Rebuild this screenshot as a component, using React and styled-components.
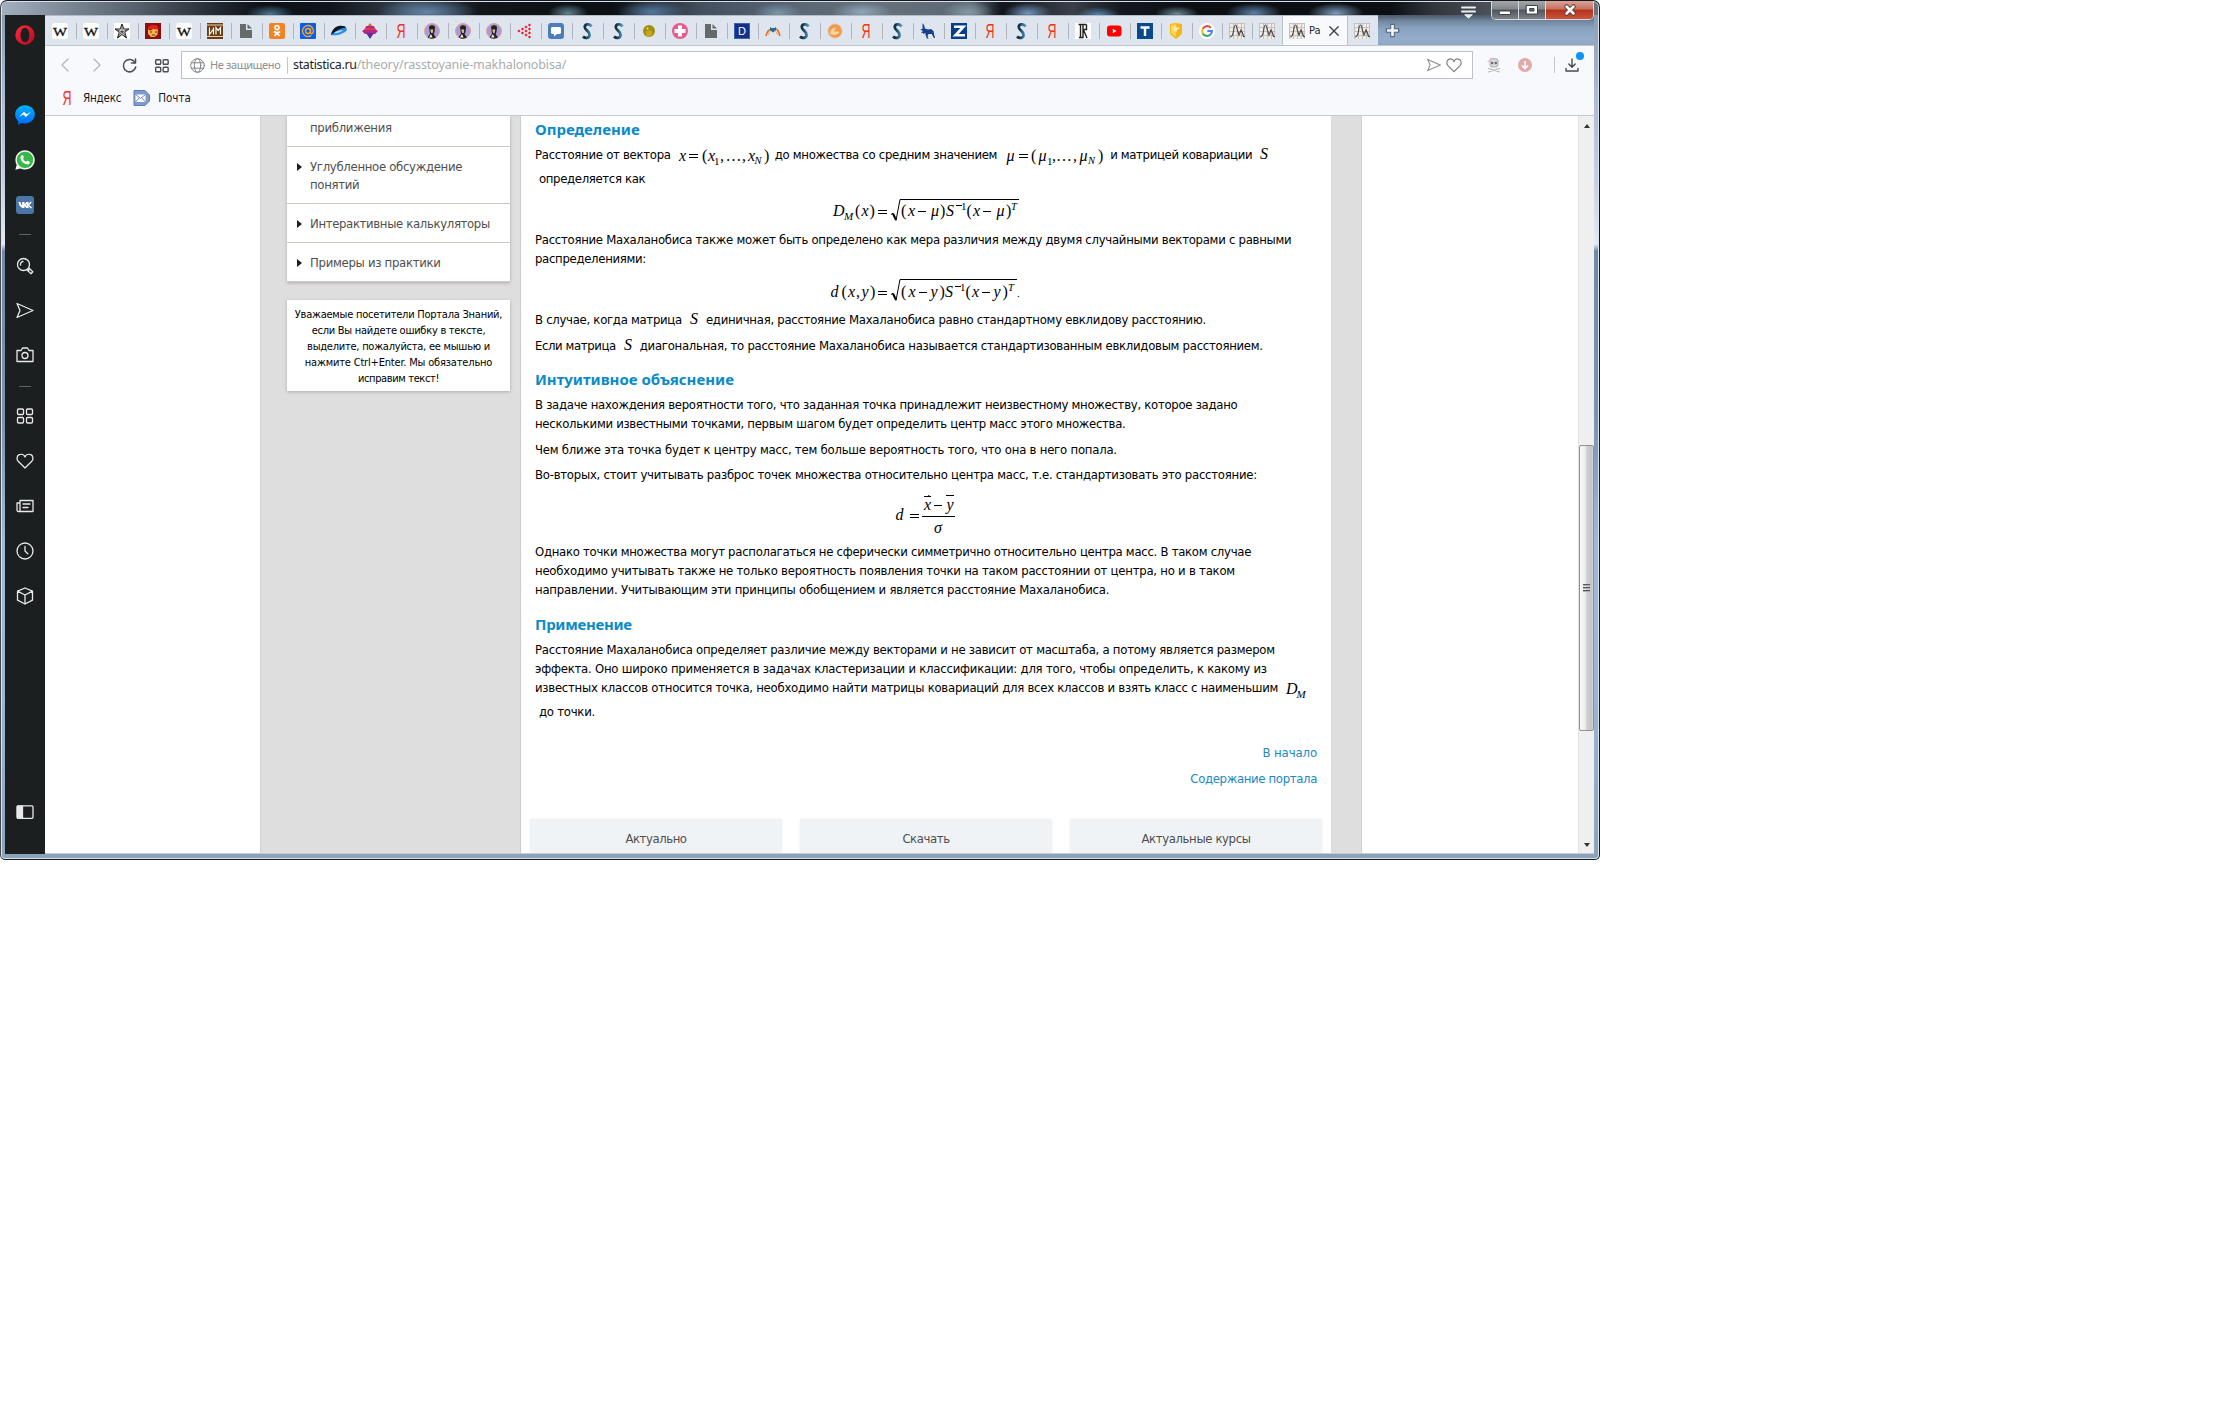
import React from 'react';
import styled, { createGlobalStyle, css } from 'styled-components';

const UI = '"DejaVu Sans Condensed", "DejaVu Sans", "Noto Sans", sans-serif';
const CHROME = '"Noto Sans", "Open Sans", sans-serif';

const Global = createGlobalStyle`
  * { box-sizing: border-box; }
  body { margin: 0; background: #fff; }
  svg { display: block; flex: none; overflow: visible; }
`;

/* ---------- window frame ---------- */
const Window = styled.div`
  width: 1600px;
  height: 860px;
  display: flex;
  flex-direction: column;
  overflow: hidden;
  border: 1px solid #14181d;
  border-left-color: #45484d;
  border-radius: 7px 7px 5px 5px;
  box-shadow: inset 0 0 0 1px #d7e3ee;
  background: linear-gradient(180deg, #8797ab 0, #a9b9d2 90px, #c3d0e4 180px, #e4e9f4 243px, #7188a6 250px, #7c93b1 420px, #9fbad9 540px, #9cb5d0 700px, #8ba3b9 100%);
  font-family: ${UI};
`;

const TitleBar = styled.header`
  height: 13px;
  flex: none;
  margin: 1px 1px 0;
  position: relative;
  border-radius: 5px 5px 0 0;
  background:
    radial-gradient(ellipse 24px 9px at 268px 12px, #4d7594, transparent),
    radial-gradient(ellipse 50px 14px at 425px 10px, #6285a8, transparent),
    radial-gradient(ellipse 20px 9px at 566px 11px, #5f8190, transparent),
    radial-gradient(ellipse 34px 12px at 650px 10px, #54799f, transparent),
    radial-gradient(ellipse 24px 10px at 776px 11px, #7997a8, transparent),
    radial-gradient(ellipse 30px 10px at 860px 10px, #8fa8ba, transparent),
    radial-gradient(ellipse 26px 11px at 966px 10px, #8499a5, transparent),
    radial-gradient(ellipse 24px 10px at 1026px 11px, #7193bb, transparent),
    radial-gradient(ellipse 22px 8px at 1096px 13px, #5683ae, transparent),
    radial-gradient(ellipse 22px 8px at 1175px 12px, #6b8890, transparent),
    radial-gradient(ellipse 28px 10px at 1252px 11px, #5c80a4, transparent),
    radial-gradient(ellipse 28px 10px at 1334px 11px, #7c9bb8, transparent),
    linear-gradient(90deg, #a3b0bf 0, #7e8a98 60px, #59636f 130px, #222931 215px, #0d1116 260px, #11161c 330px, #38424f 410px, #12161b 480px, #0c1015 610px, #44505f 700px, #5b6775 800px, #66707b 880px, #5b6874 970px, #11151a 1000px, #3a4048 1070px, #14181e 1120px, #0b0f14 1200px, #0c1015 1390px, #30353b 1430px, #51575f 1500px, #6d737a 100%);
`;

const WindowButtons = styled.div`
  position: absolute;
  right: 4px;
  top: -1px;
  height: 19px;
  display: flex;
  z-index: 3;
  border: 1px solid #d5dbe2;
  border-top: 0;
  border-radius: 0 0 5px 5px;
  overflow: hidden;
`;
const WindowButton = styled.div`
  width: ${p => (p.$close ? 47 : 27)}px;
  display: flex;
  align-items: center;
  justify-content: center;
  border-right: ${p => (p.$close ? 0 : 1)}px solid #d5dbe2;
  background: ${p => p.$close
    ? 'linear-gradient(#d8a499 0, #c6705f 45%, #b5311a 50%, #c9553b 100%)'
    : 'linear-gradient(#a3a6aa 0, #83878c 45%, #50555c 50%, #7d8288 100%)'};
`;
const TabMenu = styled.div`
  position: absolute;
  left: 1459px;
  top: 4px;
`;

const Frame = styled.div`
  flex: 1;
  min-height: 0;
  display: flex;
  margin: 0 5px 5px 4px;
`;

/* ---------- side panel ---------- */
const SidePanel = styled.nav`
  width: 40px;
  flex: none;
  background: #1b1f20;
  display: flex;
  flex-direction: column;
  align-items: center;
  padding-bottom: 32px;
`;
const SideItem = styled.div`
  height: ${p => p.$h || 45}px;
  width: 40px;
  display: flex;
  align-items: center;
  justify-content: center;
  margin-top: ${p => p.$mt || 0}px;
`;
const SideRule = styled.div`
  width: 12px;
  height: 1px;
  background: #5e6264;
  margin-top: ${p => p.$mt}px;
`;
const Spacer = styled.div`flex: 1;`;

const Browser = styled.div`
  flex: 1;
  min-width: 0;
  display: flex;
  flex-direction: column;
`;

/* ---------- tabs ---------- */
const TabStrip = styled.div`
  height: 30px;
  flex: none;
  display: flex;
  background: linear-gradient(180deg, #4b5867 0, #71869f 6px, #8aa2bf 13px, #94adcb 24px, #8fa6c2 100%);
`;
const Tabs = styled.div`
  display: flex;
  background: #dfe5ee;
  border-top: 1px solid #b4bbc4;
  padding-left: 1px;
`;
const Tab = styled.div`
  width: ${p => p.$w || 31}px;
  padding-left: 6px;
  display: flex;
  align-items: center;
  &::after {
    content: '';
    width: 1px;
    height: 16px;
    margin-left: auto;
    background: #b0b4ba;
    display: ${p => (p.$last ? 'none' : 'block')};
  }
`;
const ActiveTab = styled.div`
  width: 66px;
  display: flex;
  align-items: center;
  padding-left: 6px;
  background: #f8f9fc;
  border: solid #bcc2c9;
  border-width: 0 1px;
`;
const TabTitle = styled.span`
  width: 14px;
  margin: 0 6px 0 4px;
  white-space: nowrap;
  font: 11px/16px ${UI};
  letter-spacing: -0.4px;
  color: #23272c;
`;
const NewTab = styled.div`
  display: flex;
  align-items: center;
  padding-left: 8px;
`;

/* ---------- toolbar ---------- */
const Chrome = styled.div`
  height: 71px;
  flex: none;
  background: #f8f9fc;
  border-top: 1px solid #bfc4ca;
  border-bottom: 1px solid #c6c9cd;
`;
const Toolbar = styled.div`
  display: flex;
  align-items: center;
  height: 38px;
  padding-left: 4px;
`;
const ToolIcon = styled.div`
  width: 32px;
  display: flex;
  justify-content: center;
`;
const AddressBar = styled.div`
  width: 1292px;
  flex: none;
  height: 28px;
  margin-left: 4px;
  padding: 0 10px 0 8px;
  display: flex;
  align-items: center;
  background: #fff;
  border: 1px solid #bdc1c5;
  font: 12.5px/18px ${CHROME};
`;
const Security = styled.span`
  font-size: 11px;
  letter-spacing: -0.38px;
  color: #8c8f92;
  width: 77px;
  margin-left: 5px;
  white-space: nowrap;
`;
const Divider = styled.span`
  width: 1px;
  height: ${p => p.$h || 17}px;
  margin-left: ${p => p.$ml || 0}px;
  background: #c3c6c9;
`;
const Host = styled.span`
  margin-left: 5px;
  color: #222;
  letter-spacing: -0.35px;
`;
const Path = styled.span`
  color: #a9acaf;
  letter-spacing: -0.12px;
  flex: 1;
`;
const AddressActions = styled.div`
  display: flex;
  align-items: center;
  gap: 5px;
`;
const Extensions = styled.div`
  display: flex;
  align-items: center;
  margin-left: 14px;
  gap: 17px;
`;
const Downloads = styled.div`
  position: relative;
  margin-left: 10px;
`;
const Dot = styled.i`
  position: absolute;
  right: -5px;
  top: -6px;
  width: 8px;
  height: 8px;
  border-radius: 50%;
  background: #0a93fb;
`;
const Bookmarks = styled.div`
  display: flex;
  align-items: center;
  height: 28px;
  padding-left: 14px;
  font: 11.5px/16px ${UI};
  color: #16181a;
`;
const BookmarkLabel = styled.span`
  margin: 0 12px 0 8px;
  letter-spacing: ${p => p.$ls || 0}px;
`;

/* ---------- page ---------- */
const Viewport = styled.div`
  flex: 1;
  min-height: 0;
  display: flex;
  background: #fff;
  overflow: hidden;
  padding-left: 215px;
  border-bottom: 1px solid #c8ccd0;
`;
const Site = styled.div`
  width: 1102px;
  display: flex;
  background: #dedede;
  border: solid #d3d3d3;
  border-width: 0 1px;
  color: #000;
`;
const Aside = styled.aside`
  width: 260px;
  flex: none;
  padding: 0 10px 0 26px;
  border-right: 1px solid #cbcbcb;
`;
const MenuCard = styled.div`
  background: #fff;
  padding-top: 3px;
  border-bottom: 1px solid #d0cbcb;
  box-shadow: 0 1px 3px rgba(90, 70, 70, 0.35);
`;
const MenuItem = styled.div`
  display: flex;
  padding: ${p => (p.$first ? 0 : 11)}px 0 9px ${p => (p.$first ? 23 : 10)}px;
  border-bottom: ${p => (p.$last ? 0 : 1)}px solid #ccc9c0;
  font-size: 13px;
  line-height: 18px;
  color: #4f4f4f;
`;
const MenuArrow = styled.i`
  width: 0;
  height: 0;
  margin: 5px 8px 0 0;
  border: solid transparent;
  border-width: 4.5px 0 4.5px 5px;
  border-left-color: #1e1e1e;
`;
const Notice = styled.div`
  margin-top: 18px;
  padding: 7px 0 4px;
  background: #fff;
  box-shadow: 0 1px 3px rgba(90, 70, 70, 0.35);
  font-size: 11px;
  line-height: 16px;
  text-align: center;
`;
const Line = styled.span`
  display: block;
  white-space: nowrap;
  letter-spacing: ${p => p.$ls || 0}px;
`;

const Article = styled.main`
  width: 810px;
  flex: none;
  background: #fff;
  padding: 3px 9px 0;
  display: flex;
  flex-direction: column;
`;
const Heading = styled.h2`
  margin: ${p => p.$mt || 0}px 0 0 5px;
  font: 700 15px/20px ${CHROME};
  letter-spacing: ${p => p.$ls || 0}px;
  color: #0a8bc8;
`;
const Paragraph = styled.div`
  margin: ${p => p.$mt || 0}px 0 0 5px;
  font-size: 13px;
  line-height: 19px;
`;
const MixedLine = styled.div`
  display: flex;
  height: ${p => p.$h || 19}px;
`;
const Indent = styled.div`padding-left: 4px;`;
const FormulaBlock = styled.div`
  height: ${p => p.$h}px;
  padding-left: ${p => p.$x}px;
`;
const Links = styled.div`
  margin-top: 22px;
  padding-right: 5px;
  display: flex;
  flex-direction: column;
  align-items: flex-end;
  gap: 7px;
  font-size: 13px;
  line-height: 19px;
  color: #2088c4;
`;
const Boxes = styled.div`
  margin-top: 31px;
  display: grid;
  grid-template-columns: repeat(3, 252px);
  gap: 18px;
`;
const Box = styled.div`
  height: 60px;
  padding-top: 10px;
  background: #f0f3f6;
  border-radius: 3px;
  box-shadow: 0 0 2px #e2e6ea;
  text-align: center;
  font-size: 13px;
  line-height: 19px;
  color: #4f4f4f;
`;

const ScrollBar = styled.div`
  width: 16px;
  margin-left: auto;
  display: flex;
  flex-direction: column;
  align-items: center;
  background: #efefef;
  border-left: 1px solid #e3e3e3;
  padding: 8px 0 6px;
`;
const ScrollArrow = styled.i`
  width: 0;
  height: 0;
  border: solid transparent;
  border-width: ${p => (p.$up ? '0 3.5px 4px' : '4px 3.5px 0')};
  ${p => (p.$up ? css`border-bottom-color: #333;` : css`border-top-color: #333;`)}
`;
const Thumb = styled.div`
  width: 15px;
  height: 286px;
  margin: 317px 0 auto;
  border: 1px solid #8d8f92;
  border-radius: 2px;
  background: linear-gradient(90deg, #fafafa 0, #e9e9ea 42%, #cfcfd2 52%, #c3c4c8 90%, #dcdcde 100%);
  display: flex;
  flex-direction: column;
  align-items: center;
  justify-content: center;
  gap: 1px;
`;
const Grip = styled.i`
  width: 7px;
  height: 2px;
  background: #55565a;
  border-bottom: 1px solid #b0b0b4;
`;

/* ---------- formulas ---------- */
const Formula = styled.svg`
  overflow: visible;
  font-family: "Liberation Serif", serif;
  font-size: 16px;
  fill: #000;
`;
const I = ({ x, y, s, children }) => <text x={x} y={y} fontSize={s} fontStyle="italic">{children}</text>;
const R = ({ x, y, s, children }) => <text x={x} y={y} fontSize={s}>{children}</text>;
const Bar = ({ x, y, w = 8 }) => <rect x={x} y={y} width={w} height="1" />;
const Eq = ({ x, y }) => <><Bar x={x} y={y - 6} w={9} /><Bar x={x} y={y - 3} w={9} /></>;

const VectorX = () => (
  <Formula width="104" height="19">
    <I x="8" y="15.5">x</I><Eq x={18} y={15} /><R x="31" y="15.5">(</R><I x="37" y="15.5">x</I>
    <R x="43" y="20" s="11">1</R><R x="49" y="15.5">,</R><R x="54.5" y="15.5">…</R><R x="71" y="15.5">,</R>
    <I x="77" y="15.5">x</I><I x="83.5" y="19" s="10.5">N</I><R x="93" y="15.5">)</R>
  </Formula>
);
const VectorMu = () => (
  <Formula width="113" height="19">
    <I x="9.5" y="15.5">μ</I><Eq x={22} y={15} /><R x="34" y="15.5">(</R><I x="41.5" y="15.5">μ</I>
    <R x="50" y="20" s="11">1</R><R x="55" y="15.5">,</R><R x="59" y="15.5">…</R><R x="76" y="15.5">,</R>
    <I x="82.5" y="15.500">μ</I><I x="91" y="19" s="10.5">N</I><R x="101" y="15.5">)</R>
  </Formula>
);
const LetterS = ({ w = 24, x = 8 }) => <Formula width={w} height="19"><I x={x} y="14">S</I></Formula>;
const LetterD = () => (
  <Formula width="30" height="19"><I x="8" y="16">D</I><I x="18.5" y="20" s="11">M</I></Formula>
);
const Radical = ({ x, y, w }) => (
  <g>
    <path d={`M${x} ${y + 15.5}l2-1.3`} stroke="#000" fill="none" />
    <path d={`M${x + 2} ${y + 14.5}l3 6.5`} stroke="#000" strokeWidth="2" fill="none" />
    <path d={`M${x + 5} ${y + 21.5}L${x + 9} ${y + 0.5}H${x + w}`} stroke="#000" fill="none" />
  </g>
);
const FormulaDM = () => (
  <Formula width="190" height="42">
    <I x="3" y="28">D</I><I x="14" y="32" s="11">M</I><R x="25" y="28">(</R><I x="31.5" y="28">x</I><R x="39.5" y="28">)</R>
    <Eq x={48} y={28} /><Radical x={61} y={11} w={128} />
    <R x="71" y="28">(</R><I x="78" y="28">x</I><Bar x={88} y={23} /><I x="101" y="28">μ</I><R x="110" y="28">)</R>
    <I x="116" y="28">S</I><Bar x={126} y={17} w={6} /><R x="131" y="22" s="11">1</R><R x="136.5" y="28">(</R>
    <I x="143" y="28">x</I><Bar x={153} y={23} /><I x="166.5" y="28">μ</I><R x="176" y="28">)</R><I x="181" y="22" s="10.5">T</I>
  </Formula>
);
const FormulaD = () => (
  <Formula width="190" height="42">
    <I x="0.5" y="28.5">d</I><R x="11.5" y="28.5">(</R><I x="18" y="28.5">x</I><R x="26" y="28.5">,</R><I x="31.5" y="28.5">y</I>
    <R x="40" y="28.5">)</R><Eq x={48} y={29} /><Radical x={61} y={11} w={126} />
    <R x="71" y="28.5">(</R><I x="78.5" y="28.5">x</I><Bar x={89} y={24} /><I x="100.5" y="28.5">y</I><R x="109.5" y="28.5">)</R>
    <I x="115" y="28.5">S</I><Bar x={125} y={18} w={6} /><R x="130" y="22.5" s="11">1</R><R x="135.5" y="28.5">(</R>
    <I x="142" y="28.5">x</I><Bar x={152} y={24} /><I x="163.5" y="28.5">y</I><R x="172.5" y="28.5">)</R>
    <I x="178" y="22.5" s="10.5">T</I><R x="187" y="28.5" s="11">.</R>
  </Formula>
);
const FormulaSigma = () => (
  <Formula width="60" height="58">
    <I x="0.5" y="36">d</I><Eq x={15} y={36} /><Bar x={27} y={32} w={33} />
    <I x="29" y="26">x</I><Bar x={39} y={21} /><I x="51.5" y="26">y</I>
    <Bar x={29} y={12} w={7} /><path d="M33 11l3 1.5h-3z" /><Bar x={51} y={11} />
    <I x="39" y="49">σ</I>
  </Formula>
);

/* ---------- favicons ---------- */
const Fav = ({ children }) => <svg width="16" height="16" viewBox="0 0 16 16">{children}</svg>;
const glyph = (t, x, y, size, fill, extra = {}) => (
  <text x={x} y={y} fontSize={size} fill={fill} textAnchor="middle" {...extra}>{t}</text>
);
const favicons = {
  wiki: <Fav><rect width="16" height="16" rx="3" fill="#fff" />{glyph('W', 8, 12.5, 13, '#111', { fontFamily: 'Liberation Serif, serif', textLength: 14, lengthAdjust: 'spacingAndGlyphs', stroke: '#111', strokeWidth: 0.3 })}</Fav>,
  star: <Fav><rect width="16" height="16" fill="#fff" /><path d="M8 1l1.800 5H15l-4.200 3.200L12.500 15 8 11.500 3.500 15l1.700-5.800L1 6h5.200z" fill="#ddd" stroke="#222" strokeWidth="1" /><path d="M8 1v10.500M1 6l7 3 7-3M3.500 15L8 8l4.500 7" stroke="#333" strokeWidth=".7" fill="none" /></Fav>,
  mask: <Fav><rect width="16" height="16" fill="#8f0d10" /><path d="M3 6c0-3 3-4.500 6-4 3 0 4.500 2 4.500 4z" fill="#e0241b" /><path d="M3 6l2 1.500L8 6l5 .5-.5 5-3 2.500H6L3 11z" fill="#f3b24a" /><path d="M5 9h2M10 9h2M7 12h3" stroke="#7a2a10" /></Fav>,
  im: <Fav><rect width="16" height="16" fill="#6b3c12" /><path d="M0 2h16M0 13.500h16" stroke="#e6d3bb" /><path d="M2.500 4.500v7l4-5.500M6.500 4.500v7M9 11.500v-7l2.200 3 2.300-3v7" stroke="#fff" strokeWidth="1.200" fill="none" /></Fav>,
  doc: <Fav><path d="M2 1h6v6h6v8H2z" fill="#666a6b" /><path d="M9.500 1L14 5.500H9.500z" fill="#666a6b" /></Fav>,
  ok: <Fav><rect width="16" height="16" rx="2" fill="#f58220" /><circle cx="8" cy="4.600" r="2" fill="none" stroke="#fff" strokeWidth="1.600" /><path d="M4.800 8.500c2 1.400 4.400 1.400 6.400 0M8 9.800L5.500 13M8 9.800l2.500 3.200" stroke="#fff" strokeWidth="1.700" fill="none" /></Fav>,
  mail: <Fav><rect width="16" height="16" rx="1" fill="#0a5cf0" /><circle cx="8" cy="8" r="2.500" fill="none" stroke="#f5a623" strokeWidth="1.400" /><path d="M10.500 5.500v4c0 2 3 1.500 3-1.500a5.500 5.500 0 1 0-2.200 4.400" fill="none" stroke="#f5a623" strokeWidth="1.400" /></Fav>,
  dolphin: <Fav><path d="M0 12C1 6 6 2 11 3c3 0 5 2 5 4-3 4-10 6-16 5z" fill="#2c8be8" /><path d="M0 12C1 6 6 2 11 3c2 0 4 .5 4 1.500C10 5 5 7.500 0 12z" fill="#12161f" /><path d="M3 10c3-2 6-3 9-2.500-3 2-6 3-9 2.500z" fill="#b9defa" /></Fav>,
  gem: <Fav><path d="M8 0l3 4H5z" fill="#e2682a" /><path d="M4 3h8l1 3 3 2-3 3H3L0 8l3-2z" fill="#b32a86" /><path d="M3 5h10l1 2H2z" fill="#e03a4a" /><path d="M4 10h8l-4 6z" fill="#5d2fa0" /></Fav>,
  ya: <Fav>{glyph('Я', 8, 15, 20, '#f33219', { fontFamily: 'Liberation Sans, sans-serif', textLength: 9, lengthAdjust: 'spacingAndGlyphs' })}</Fav>,
  avatar: <Fav><circle cx="8" cy="8" r="7.500" fill="#a79bd8" stroke="#e8a088" /><path d="M5 4c1-2.500 6-2.500 6 .5L10.500 9l-1 2 2.500 3.500c-3 1.500-6 1.500-8.500 0L6 11z" fill="#23201f" /><path d="M6.200 6.500h3L8.700 10H7.200z" fill="#e0c28c" /><path d="M5 14.500l2-3.500 1.500 3.500z" fill="#f2f2f2" /></Fav>,
  dots: <Fav>{[[2, 8], [5.500, 6], [5.500, 10], [9, 4], [9, 8], [9, 12], [12.500, 2], [12.500, 6], [12.500, 10], [12.500, 14]].map(([x, y]) => <path key={x + '-' + y} d={`M${x} ${y - 1.600}l1.600 1.600-1.600 1.600-1.600-1.600z`} fill="#ee1c2a" />)}</Fav>,
  chat: <Fav><rect width="16" height="16" rx="3" fill="#4d7dba" /><path d="M4 4h8l1 1v5l-1 1H9l-3 2.500V11H4l-1-1V5z" fill="#fff" /></Fav>,
  s: <Fav><defs><linearGradient id="sg"><stop offset=".3" stopColor="#163345" /><stop offset="1" stopColor="#4a9cc8" /></linearGradient></defs><path d="M12.500 3.500C11 .5 6 .5 5.800 4c-.3 3 5 4 4.800 8 0 3-4 4-6.600 1.500" stroke="url(#sg)" strokeWidth="2.800" fill="none" /></Fav>,
  ball: <Fav><circle cx="8" cy="8" r="6" fill="#a08f0a" /><circle cx="8" cy="10.500" r="3.200" fill="#c4a81c" /><circle cx="6.500" cy="5.500" r="1" fill="#e8e2a0" /></Fav>,
  plus: <Fav><circle cx="8" cy="8" r="8" fill="#e9598c" /><path d="M8 2.500v11M2.500 8h11" stroke="#fff" strokeWidth="4" /></Fav>,
  d: <Fav><rect x=".5" y=".5" width="15" height="15" fill="#12318a" stroke="#3f62b0" />{glyph('D', 8, 12, 11, '#fff', { fontFamily: 'Liberation Sans, sans-serif' })}</Fav>,
  arcs: <Fav><path d="M1 13c1-4 3-7 5-6.500s2 2 4 0 4 2.500 5 6.500" stroke="#e4682b" strokeWidth="1.500" fill="none" /><path d="M3 12l3-5M10 7l3 5" stroke="#f0b030" /><path d="M5 4l1.500 1h3L11 4v3L8 9.500 5 7z" fill="#1d6f9e" /></Fav>,
  orange: <Fav><circle cx="8" cy="8" r="7.200" fill="#f29a45" stroke="#d9d2ca" /><path d="M3 11c0-4 3-7 7-6.500-2 1-3 2.500-2.500 4.500 1.500-1 3.500-1 5 0-2 3-6 4-9.500 2z" fill="#fbe2b8" opacity=".8" /></Fav>,
  horse: <Fav><path d="M2.500 0L4 2l1 3.500 3 1 3-.5 2.500 2 .5 3 1 4h-1.200l-2-4H8.500L7.500 13l1 2.500H7L5.500 12V10L3 11v-1L1 9.500l2-1.500L0 6.500 2.500 6z" fill="#15408c" /></Fav>,
  z: <Fav><rect width="16" height="16" fill="#063f8c" /><path d="M3 3.700h9.500L4.500 12.300H14" stroke="#fff" strokeWidth="2.600" fill="none" /></Fav>,
  r: <Fav><rect width="16" height="16" fill="#fff" /><path d="M3.500 1.500h8M5.500 1v14M8 1v14M4 14.500h4.500M8.500 6.500h3v-5M8.500 7l3.500 8" stroke="#222" strokeWidth="1.400" fill="none" /></Fav>,
  yt: <Fav><rect x="1" y="2.500" width="14.500" height="11" rx="3" fill="#f00" /><path d="M6.800 5.800v4.400L10.500 8z" fill="#fff" /></Fav>,
  t: <Fav><rect width="16" height="16" fill="#0a4a8c" /><path d="M3.500 4.500h9M8 4.500V13" stroke="#fff" strokeWidth="2.400" /></Fav>,
  shield: <Fav><path d="M2 1l6-1 6 1v10l-6 5-6-5z" fill="#f2b616" /><path d="M3 2l5-1v13l-5-4z" fill="#f9d45e" /><path d="M5 4c0 3 6 3 6 0M8 3v6M5.500 8l5-3" fill="none" stroke="#fff6d0" /></Fav>,
  google: <Fav><circle cx="8" cy="8" r="8" fill="#fff" /><path d="M11.800 4.800A5 5 0 0 0 3.700 5.700" stroke="#ea4335" strokeWidth="2" fill="none" /><path d="M3.700 5.700a5 5 0 0 0 0 4.700" stroke="#fbbc05" strokeWidth="2" fill="none" /><path d="M3.700 10.400a5 5 0 0 0 7.600 1.300" stroke="#34a853" strokeWidth="2" fill="none" /><path d="M11.300 11.700C12.500 10.700 13 9.500 13 8H8.300" stroke="#4285f4" strokeWidth="2" fill="none" /></Fav>,
  chart: <Fav><rect width="16" height="16" fill="#efece8" /><path d="M.5 0v16M4.500 0v16M8.500 0v16M12.500 0v16M15.500 0v16M0 .5h16M0 4.500h16M0 8.500h16M0 12.500h16" stroke="#bdb9b4" strokeWidth=".8" /><path d="M1 14c2 0 3-2 3.500-6S5.500 2 6.500 2s1.500 3 2 5.500L10 12l2-5 1.500 3 1 3.500H16" stroke="#4b4b4b" strokeWidth="1.200" fill="none" /></Fav>,
};
const tabs = ['wiki', 'wiki', 'star', 'mask', 'wiki', 'im', 'doc', 'ok', 'mail', 'dolphin', 'gem', 'ya', 'avatar', 'avatar', 'avatar', 'dots', 'chat', 's', 's', 'ball', 'plus', 'doc', 'd', 'arcs', 's', 'orange', 'ya', 's', 'horse', 'z', 'ya', 's', 'ya', 'r', 'yt', 't', 'shield', 'google', 'chart', 'chart'];
const tabWidth = i => (i < 37 ? 31 : i < 39 ? 30 : 29);

/* ---------- line icons ---------- */
const Ico = ({ w = 18, h = w, c = '#e8e9ea', sw = 1.3, children }) => (
  <svg width={w} height={h} viewBox={`0 0 ${w} ${h}`} fill="none" stroke={c} strokeWidth={sw} strokeLinejoin="round" strokeLinecap="round">{children}</svg>
);
const Opera = () => (
  <svg width="20" height="20" viewBox="0 0 20 20">
    <defs><linearGradient id="op" x2="1" y2="1"><stop stopColor="#ff2b3f" /><stop offset="1" stopColor="#b8071f" /></linearGradient></defs>
    <path fillRule="evenodd" fill="url(#op)" d="M10 .3a9.700 9.700 0 1 0 0 19.400 9.700 9.700 0 1 0 0-19.400zm0 2.500c2.500 0 4.400 3 4.400 7.200s-1.900 7.200-4.400 7.200S5.600 14.200 5.600 10 7.500 2.800 10 2.800z" />
  </svg>
);
const Messenger = () => (
  <svg width="20" height="20" viewBox="0 0 20 20">
    <defs><linearGradient id="ms" x2="0" y2="1"><stop stopColor="#00b2ff" /><stop offset="1" stopColor="#006aff" /></linearGradient></defs>
    <path fill="url(#ms)" d="M10 .3C4.500.3.2 4.300.2 9.500c0 2.700 1.200 5 3 6.500V19.700l3.200-1.700c1.100.3 2.300.5 3.600.5 5.500 0 9.800-4 9.800-9.200S15.500.3 10 .3z" />
    <path fill="#fff" d="M4 12l5-5.300 2.700 2.600L16 6.700l-5 5.300-2.700-2.600z" />
  </svg>
);
const WhatsApp = () => (
  <svg width="20" height="20" viewBox="0 0 20 20">
    <path fill="#f2f4f2" d="M10 .2A9.700 9.700 0 0 0 1.700 14.800L.4 19.700l5-1.300A9.700 9.700 0 1 0 10 .2z" />
    <circle cx="10" cy="9.900" r="8.200" fill="#36b947" />
    <path fill="#fff" d="M7 5.200c.6-.3 1 0 1.200.6l.6 1.500c.1.400-.6 1-.8 1.400.8 1.500 1.900 2.500 3.400 3.100.4-.2.9-1.200 1.300-1l1.800.9c.6.3.2 1.500-.2 2-1 1.200-3.200.8-4.800-.1C7.300 12.300 5.300 9.800 5.500 7.500 5.600 6.500 6.300 5.500 7 5.200z" />
  </svg>
);
const VK = () => (
  <svg width="18" height="18" viewBox="0 0 18 18">
    <rect width="18" height="18" rx="3" fill="#4a76a8" />
    <path fill="#fff" d="M2.500 6h2c.2 2 1 3.200 1.700 3.400V6h2.300v2.300L10.500 6h2.200L10 9l3 3h-2.500L8.500 10v2H7.800C5 12 2.800 9.500 2.500 6z" />
    <path d="M11.500 6v6M15.300 6L12 9l3.500 3" stroke="#fff" strokeWidth="1.500" fill="none" />
  </svg>
);
const Heart = p => <Ico {...p}><path d="M9 16L2.200 9.200C.3 7 .8 3.800 3.200 2.700 5.500 1.700 8 2.700 9 5c1-2.300 3.500-3.300 5.800-2.300 2.400 1.100 2.900 4.300 1 6.500z" /></Ico>;
const Plane = p => <Ico {...p}><path d="M1 1.500L17 8.500 1 15.500 4 8.500z" /></Ico>;
const Speed = p => <Ico {...p}><rect x="1.500" y="2" width="6" height="5.500" rx="1" /><rect x="10.500" y="2" width="6" height="5.500" rx="1" /><rect x="1.500" y="10.500" width="6" height="5.500" rx="1" /><rect x="10.500" y="10.500" width="6" height="5.500" rx="1" /></Ico>;

const SideBar = () => (
  <SidePanel>
    <SideItem $h={20} $mt={10}><Opera /></SideItem>
    <SideItem $mt={47}><Messenger /></SideItem>
    <SideItem><WhatsApp /></SideItem>
    <SideItem><VK /></SideItem>
    <SideRule $mt={7} />
    <SideItem $mt={8}><Ico><circle cx="7.500" cy="7.500" r="6" /><path d="M12 12l1 1M13.200 11.300l3.600 3.400-1.800 2-3.700-3.500M4.500 8a3 3 0 0 1 2.500-3.500" /></Ico></SideItem>
    <SideItem><Plane /></SideItem>
    <SideItem $h={43}><Ico><path d="M1 4.500h4l1.500-2.500h5L13 4.500h4v11H1z" /><circle cx="9" cy="9.500" r="3" /></Ico></SideItem>
    <SideRule $mt={10} />
    <SideItem $mt={6}><Speed /></SideItem>
    <SideItem><Heart /></SideItem>
    <SideItem><Ico><path d="M4 3.500h13v11H2.500C1.500 14.500 1 14 1 13V6h3M4 3.500v10M7 7h7M7 10.500h5" /></Ico></SideItem>
    <SideItem><Ico><circle cx="9" cy="9" r="8" /><path d="M9 4.500V9l2.800 2.800" /></Ico></SideItem>
    <SideItem><Ico><path d="M9 1l7.500 3.200v9L9 17l-7.500-3.800v-9zM1.500 4.200L9 8l7.500-3.800M9 8v9" /></Ico></SideItem>
    <Spacer />
    <SideItem $h={20}><Ico><rect x="1" y="2.800" width="16" height="12.500" rx="1" /><rect x="1.500" y="3.200" width="5" height="11.600" fill="#e8e9ea" /></Ico></SideItem>
  </SidePanel>
);

const menu = [
  { lines: [['приближения', -0.3]], first: true },
  { lines: [['Углубленное обсуждение', -0.31], ['понятий', -0.3]] },
  { lines: [['Интерактивные калькуляторы', -0.35]] },
  { lines: [['Примеры из практики', -0.29]], last: true },
];
const notice = [
  ['Уважаемые посетители Портала Знаний,', -0.24],
  ['если Вы найдете ошибку в тексте,', -0.26],
  ['выделите, пожалуйста, ее мышью и', -0.24],
  ['нажмите Ctrl+Enter. Мы обязательно', -0.18],
  ['исправим текст!', -0.36],
];
const boxes = [['Актуально', -0.44], ['Скачать', -0.42], ['Актуальные курсы', -0.38]];

const Lines = ({ items }) => items.map(([t, ls]) => <Line key={t} $ls={ls}>{t}</Line>);

const Content = () => (
  <Article>
    <Heading>Определение</Heading>
    <Paragraph $mt={6}>
      <MixedLine $h={24}>
        <Line $ls={-0.28}>Расстояние от вектора</Line><VectorX />
        <Line $ls={-0.29}>до множества со средним значением</Line><VectorMu />
        <Line $ls={-0.34}>и матрицей ковариации</Line><LetterS />
      </MixedLine>
      <Indent><Line $ls={-0.34}>определяется как</Line></Indent>
    </Paragraph>
    <FormulaBlock $h={42} $x={300}><FormulaDM /></FormulaBlock>
    <Paragraph>
      <Lines items={[
        ['Расстояние Махаланобиса также может быть определено как мера различия между двумя случайными векторами с равными', -0.275],
        ['распределениями:', -0.31],
      ]} />
    </Paragraph>
    <FormulaBlock $h={42} $x={300}><FormulaD /></FormulaBlock>
    <Paragraph>
      <MixedLine>
        <Line $ls={-0.29}>В случае, когда матрица</Line><LetterS />
        <Line $ls={-0.265}>единичная, расстояние Махаланобиса равно стандартному евклидову расстоянию.</Line>
      </MixedLine>
    </Paragraph>
    <Paragraph $mt={7}>
      <MixedLine>
        <Line $ls={-0.4}>Если матрица</Line><LetterS />
        <Line $ls={-0.275}>диагональная, то расстояние Махаланобиса называется стандартизованным евклидовым расстоянием.</Line>
      </MixedLine>
    </Paragraph>
    <Heading $mt={14}>Интуитивное объяснение</Heading>
    <Paragraph $mt={6}>
      <Lines items={[
        ['В задаче нахождения вероятности того, что заданная точка принадлежит неизвестному множеству, которое задано', -0.285],
        ['несколькими известными точками, первым шагом будет определить центр масс этого множества.', -0.295],
      ]} />
    </Paragraph>
    <Paragraph $mt={7}>
      <Line $ls={-0.225}>Чем ближе эта точка будет к центру масс, тем больше вероятность того, что она в него попала.</Line>
    </Paragraph>
    <Paragraph $mt={6}>
      <Line $ls={-0.255}>Во-вторых, стоит учитывать разброс точек множества относительно центра масс, т.е. стандартизовать это расстояние:</Line>
    </Paragraph>
    <FormulaBlock $h={58} $x={365}><FormulaSigma /></FormulaBlock>
    <Paragraph>
      <Lines items={[
        ['Однако точки множества могут располагаться не сферически симметрично относительно центра масс. В таком случае', -0.28],
        ['необходимо учитывать также не только вероятность появления точки на таком расстоянии от центра, но и в таком', -0.24],
        ['направлении. Учитывающим эти принципы обобщением и является расстояние Махаланобиса.', -0.225],
      ]} />
    </Paragraph>
    <Heading $mt={15} $ls={-0.3}>Применение</Heading>
    <Paragraph $mt={6}>
      <Lines items={[
        ['Расстояние Махаланобиса определяет различие между векторами и не зависит от масштаба, а потому является размером', -0.255],
        ['эффекта. Оно широко применяется в задачах кластеризации и классификации: для того, чтобы определить, к какому из', -0.235],
      ]} />
      <MixedLine $h={24}>
        <Line $ls={-0.26}>известных классов относится точка, необходимо найти матрицы ковариаций для всех классов и взять класс с наименьшим</Line><LetterD />
      </MixedLine>
      <Indent><Line $ls={-0.25}>до точки.</Line></Indent>
    </Paragraph>
    <Links>
      <Line $ls={-0.1}>В начало</Line>
      <Line $ls={-0.34}>Содержание портала</Line>
    </Links>
    <Boxes>{boxes.map(([t, ls]) => <Box key={t}><Line $ls={ls}>{t}</Line></Box>)}</Boxes>
  </Article>
);

export default function App() {
  return (
    <>
      <Global />
      <Window>
        <TitleBar>
          <TabMenu><Ico w={15} h={13} c="#eceff2" sw={2}><path d="M1 1.500h13M1 5.500h13" /><path d="M4 9l3.500 3L11 9z" fill="#eceff2" strokeWidth="1" /></Ico></TabMenu>
          <WindowButtons>
            <WindowButton><Ico w={14} h={12} c="#3f444a" sw={1}><rect x="1.500" y="7" width="11" height="3.500" fill="#fff" /></Ico></WindowButton>
            <WindowButton><Ico w={14} h={12} c="#3f444a" sw={1}><path fillRule="evenodd" fill="#fff" d="M1.500 1.500h11v8.500h-11zM5 4.500h4V7H5z" /></Ico></WindowButton>
            <WindowButton $close><Ico w={14} h={12}><path d="M3.500 2.500l7 7M10.500 2.500l-7 7" stroke="#5c3a3c" strokeWidth="4.500" /><path d="M3.500 2.500l7 7M10.500 2.500l-7 7" stroke="#fff" strokeWidth="2.500" /></Ico></WindowButton>
          </WindowButtons>
        </TitleBar>
        <Frame>
          <SideBar />
          <Browser>
            <TabStrip>
              <Tabs>
                {tabs.map((name, i) => <Tab key={i} $w={tabWidth(i)} $last={i === tabs.length - 1}>{favicons[name]}</Tab>)}
                <ActiveTab>
                  {favicons.chart}
                  <TabTitle>Ра</TabTitle>
                  <Ico w={10} c="#3a3d40" sw={1.3}><path d="M.8.8l8.400 8.400M9.200.8L.8 9.200" /></Ico>
                </ActiveTab>
                <Tab $w={30} $last>{favicons.chart}</Tab>
              </Tabs>
              <NewTab><Ico w={13}><path d="M6.500 2v9M2 6.500h9" stroke="#566b84" strokeWidth="4.600" strokeLinecap="square" /><path d="M6.500 1v11M1 6.500h11" stroke="#f4f6f9" strokeWidth="2.600" strokeLinecap="butt" /></Ico></NewTab>
            </TabStrip>
            <Chrome>
              <Toolbar>
                <ToolIcon><Ico w={8} h={14} c="#b3b6b9"><path d="M7 1L1 7l6 6" /></Ico></ToolIcon>
                <ToolIcon><Ico w={8} h={14} c="#b3b6b9"><path d="M1 1l6 6-6 6" /></Ico></ToolIcon>
                <ToolIcon><Ico w={15} c="#4b4e51" sw={1.5}><path d="M13 4.500A6.200 6.200 0 1 0 13.700 9" /><path d="M13.500 1v4H9.500" /></Ico></ToolIcon>
                <ToolIcon><svg width="15" height="15" viewBox="0 0 18 18" fill="none" stroke="#4b4e51" strokeWidth="1.700"><rect x="2" y="2" width="6" height="5.500" rx="1" /><rect x="11" y="2" width="6" height="5.500" rx="1" /><rect x="2" y="11" width="6" height="5.500" rx="1" /><rect x="11" y="11" width="6" height="5.500" rx="1" /></svg></ToolIcon>
                <AddressBar>
                  <Ico w={15} c="#808386" sw={1}><circle cx="7.500" cy="7.500" r="6.800" /><ellipse cx="7.500" cy="7.500" rx="3.200" ry="6.800" /><path d="M1.500 4.800h12M1.500 10.200h12" /></Ico>
                  <Security>Не защищено</Security>
                  <Divider />
                  <Host>statistica.ru</Host>
                  <Path>/theory/rasstoyanie-makhalonobisa/</Path>
                  <AddressActions>
                    <svg width="14" height="14" viewBox="0 0 18 18" fill="none" stroke="#8a8d90" strokeWidth="1.400"><path d="M1 2L17 9 1 16 4 9z" /></svg>
                    <svg width="16" height="16" viewBox="0 0 18 18" fill="none" stroke="#7c7f82" strokeWidth="1.300"><path d="M9 16.500L2 9.500C.2 7.200.8 3.800 3.200 2.700 5.500 1.700 8 2.700 9 5c1-2.300 3.500-3.300 5.800-2.300 2.400 1.100 3 4.500 1.200 6.800z" /></svg>
                  </AddressActions>
                </AddressBar>
                <Extensions>
                  <Ico w={14} h={16} c="#b4b4b4" sw={1.2}><path d="M3 3.500C4 .8 10 .8 11 3.500v4L9.500 10h-5L3 7.500z" fill="#d8d8d8" /><circle cx="5.200" cy="6" r="1.200" fill="#666" stroke="none" /><circle cx="8.800" cy="6" r="1.200" fill="#666" stroke="none" /><path d="M1.500 11.500l11 3.500M12.500 11.500l-11 3.500" /><path d="M1 4.500c2-.5 2.500-3 4-3.500" stroke="#efb5b5" /></Ico>
                  <svg width="14" height="14" viewBox="0 0 14 14"><circle cx="7" cy="7" r="7" fill="#e3a9a9" /><path d="M7 3v7M4 7.500l3 3 3-3" stroke="#fff" strokeWidth="1.600" fill="none" /></svg>
                  <Divider $h={16} $ml={5} />
                </Extensions>
                <Downloads>
                  <Ico w={14} h={14} c="#47494c" sw={1.4}><path d="M7 1v8M3.800 6L7 9.200 10.200 6M1 10.500V13h12v-2.500" /></Ico>
                  <Dot />
                </Downloads>
              </Toolbar>
              <Bookmarks>
                {favicons.ya}
                <BookmarkLabel $ls={-0.2}>Яндекс</BookmarkLabel>
                <svg width="17" height="16" viewBox="0 0 17 16"><path d="M1 .5h11L16.500 5v6L12 15.500H1z" fill="#7f9bcc" stroke="#5d7db5" /><rect x="2.500" y="4.500" width="10" height="7.500" fill="#fff" /><path d="M2.500 4.500l5 4 5-4M2.500 12l3.500-4M12.500 12L9 8" stroke="#6e8abf" fill="none" /></svg>
                <BookmarkLabel>Почта</BookmarkLabel>
              </Bookmarks>
            </Chrome>
            <Viewport>
              <Site>
                <Aside>
                  <MenuCard>
                    {menu.map(m => (
                      <MenuItem key={m.lines[0][0]} $first={m.first} $last={m.last}>
                        {!m.first && <MenuArrow />}
                        <div><Lines items={m.lines} /></div>
                      </MenuItem>
                    ))}
                  </MenuCard>
                  <Notice><Lines items={notice} /></Notice>
                </Aside>
                <Content />
              </Site>
              <ScrollBar>
                <ScrollArrow $up />
                <Thumb><Grip /><Grip /><Grip /></Thumb>
                <ScrollArrow />
              </ScrollBar>
            </Viewport>
          </Browser>
        </Frame>
      </Window>
    </>
  );
}
